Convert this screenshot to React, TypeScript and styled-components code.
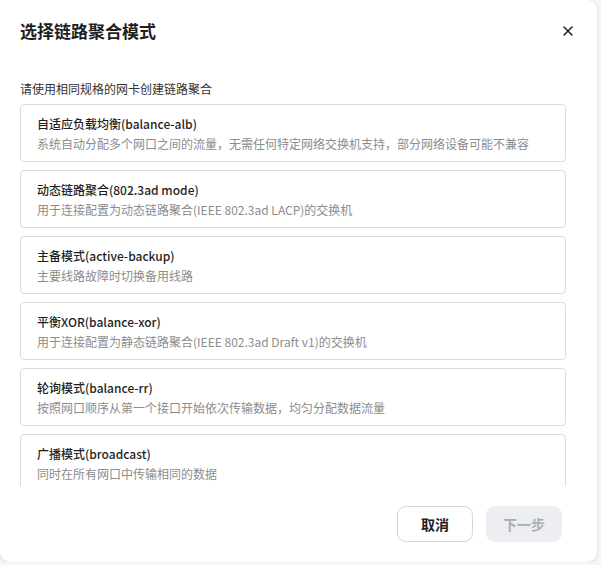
import * as React from 'react'
import styled, {createGlobalStyle} from 'styled-components'

const Global = createGlobalStyle`
  html, body {
    margin: 0;
    padding: 0;
    background: #f6f6f7;
  }
  body {
    font-family: "Noto Sans CJK SC", "Noto Sans", sans-serif;
    color: #222;
  }
`

const Dialog = styled.div`
  box-sizing: border-box;
  width: 597px;
  height: 562px;
  background: #fff;
  border-radius: 0 10px 10px 10px;
  box-shadow: 0 1px 4px rgba(0, 0, 0, 0.12);
  display: flex;
  flex-direction: column;
`

const Header = styled.div`
  display: flex;
  align-items: center;
  justify-content: space-between;
  padding: 20px 23px 0 20px;
  height: 22px;
`

const Title = styled.h2`
  margin: 0;
  font-size: 17px;
  line-height: 22px;
  font-weight: 700;
  color: #1f1f1f;
`

const Close = styled.button`
  border: 0;
  background: none;
  padding: 0;
  width: 12px;
  height: 12px;
  display: flex;
  cursor: pointer;
`

const Body = styled.div`
  padding: 38px 31px 0 20px;
  flex: 1;
  display: flex;
  flex-direction: column;
  min-height: 0;
`

const Hint = styled.p`
  margin: 0 0 6px;
  font-size: 12px;
  line-height: 18px;
  color: #333;
`

const List = styled.div`
  height: 382px;
  overflow: hidden;
  display: flex;
  flex-direction: column;
  gap: 8px;
`

const Card = styled.div`
  flex: none;
  box-sizing: border-box;
  height: 58px;
  border: 1px solid #dcdcdc;
  border-radius: 4px;
  padding: 9px 16px 7px;
  cursor: pointer;
`

const CardTitle = styled.div`
  font-size: 12px;
  line-height: 20px;
  font-weight: 500;
  color: #1f1f1f;
  white-space: nowrap;
`

const CardDesc = styled.div`
  font-size: 12px;
  line-height: 20px;
  color: #8c8c8c;
  white-space: nowrap;
`

const Footer = styled.div`
  display: flex;
  justify-content: flex-end;
  gap: 13px;
  padding: 20px 35px 20px 0;
`

const Button = styled.button<{$primary?: boolean}>`
  box-sizing: border-box;
  width: 76px;
  height: 36px;
  border-radius: 9px;
  font-family: inherit;
  font-size: 14px;
  font-weight: 700;
  border: 1px solid ${p => (p.$primary ? '#eceef2' : '#d6d6d6')};
  background: ${p => (p.$primary ? '#eceef2' : '#fff')};
  color: ${p => (p.$primary ? '#a9adb5' : '#222')};
  cursor: ${p => (p.$primary ? 'not-allowed' : 'pointer')};
`

const modes = [
  {title: '自适应负载均衡(balance-alb)', desc: '系统自动分配多个网口之间的流量，无需任何特定网络交换机支持，部分网络设备可能不兼容'},
  {title: '动态链路聚合(802.3ad mode)', desc: '用于连接配置为动态链路聚合(IEEE 802.3ad LACP)的交换机'},
  {title: '主备模式(active-backup)', desc: '主要线路故障时切换备用线路'},
  {title: '平衡XOR(balance-xor)', desc: '用于连接配置为静态链路聚合(IEEE 802.3ad Draft v1)的交换机'},
  {title: '轮询模式(balance-rr)', desc: '按照网口顺序从第一个接口开始依次传输数据，均匀分配数据流量'},
  {title: '广播模式(broadcast)', desc: '同时在所有网口中传输相同的数据'},
]

export default function App() {
  return (
    <>
      <Global/>
      <Dialog>
        <Header>
          <Title>选择链路聚合模式</Title>
          <Close aria-label="关闭">
            <svg width="12" height="12" viewBox="0 0 12 12">
              <path d="M2 2L10 10M10 2L2 10" stroke="#222" strokeWidth="1.6" strokeLinecap="round"/>
            </svg>
          </Close>
        </Header>
        <Body>
          <Hint>请使用相同规格的网卡创建链路聚合</Hint>
          <List>
            {modes.map(m => (
              <Card key={m.title}>
                <CardTitle>{m.title}</CardTitle>
                <CardDesc>{m.desc}</CardDesc>
              </Card>
            ))}
          </List>
        </Body>
        <Footer>
          <Button>取消</Button>
          <Button $primary disabled>下一步</Button>
        </Footer>
      </Dialog>
    </>
  )
}
